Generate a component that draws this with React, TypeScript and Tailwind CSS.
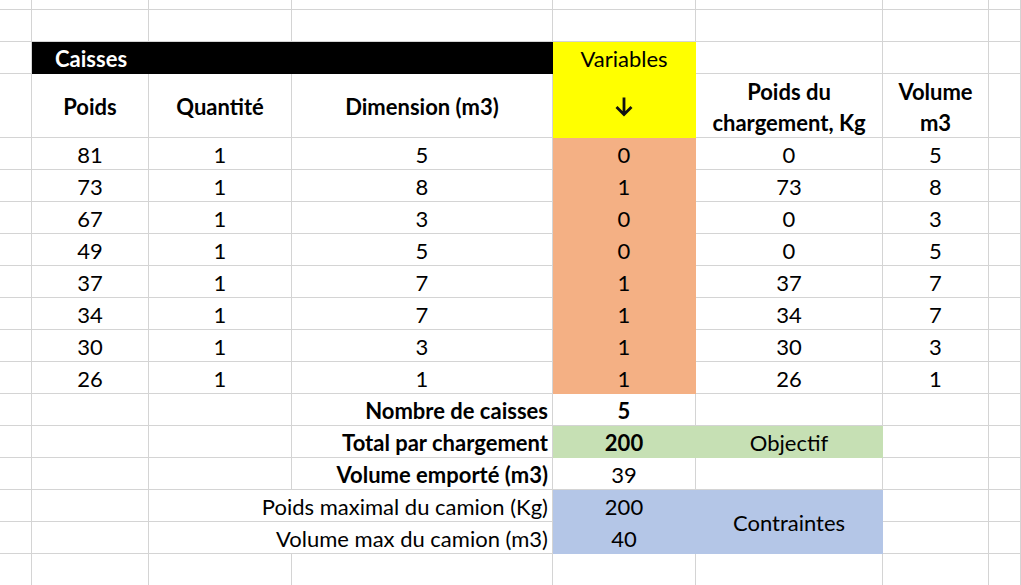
import type { ReactNode } from 'react'

const line = 'border-r border-b border-[#d4d4d4]'

type CellProps = {
  children?: ReactNode
  className?: string
}

function Cell({ children, className = '' }: CellProps) {
  return <div className={`flex items-center justify-center pt-[2px] ${className}`}>{children}</div>
}

const boxes = [
  { poids: 81, qte: 1, dim: 5, x: 0 },
  { poids: 73, qte: 1, dim: 8, x: 1 },
  { poids: 67, qte: 1, dim: 3, x: 0 },
  { poids: 49, qte: 1, dim: 5, x: 0 },
  { poids: 37, qte: 1, dim: 7, x: 1 },
  { poids: 34, qte: 1, dim: 7, x: 1 },
  { poids: 30, qte: 1, dim: 3, x: 1 },
  { poids: 26, qte: 1, dim: 1, x: 1 },
]

function ArrowDown() {
  return (
    <svg width="20" height="21" viewBox="0 0 20 21" fill="none">
      <path d="M10 1.5V18.5M2.5 11L10 18.5L17.5 11" stroke="#111" strokeWidth="2.8" />
    </svg>
  )
}

export default function App() {
  return (
    <div className="w-[1021px] h-[585px] overflow-hidden bg-white font-['Lato','Noto_Sans',sans-serif] text-[22px] text-black">
      <div className="grid grid-cols-[32px_117px_143px_261px_143px_187px_106px_1fr] grid-rows-[10px_32px_32px_64px_repeat(14,32px)]">
        {/* row 1 (cut off) */}
        {Array.from({ length: 8 }).map((_, i) => (
          <Cell key={`a${i}`} className={line} />
        ))}

        {/* row 2 */}
        {Array.from({ length: 8 }).map((_, i) => (
          <Cell key={`b${i}`} className={line} />
        ))}

        {/* row 3: titles */}
        <Cell className={line} />
        <div className="col-span-3 flex items-center pl-[23px] pt-[2px] bg-black border-r border-b border-black text-white font-bold">
          Caisses
        </div>
        <Cell className="bg-[#ffff00] border-r border-b border-[#ffff00]">Variables</Cell>
        <Cell className={line} />
        <Cell className={line} />
        <Cell className={line} />

        {/* row 4: headers */}
        <Cell className={line} />
        <Cell className={`${line} font-bold`}>Poids</Cell>
        <Cell className={`${line} font-bold`}>Quantité</Cell>
        <Cell className={`${line} font-bold`}>Dimension (m3)</Cell>
        <Cell className="bg-[#ffff00] border-r border-b border-[#ffff00]">
          <ArrowDown />
        </Cell>
        <Cell className={`${line} font-bold text-center leading-[31px]`}>
          Poids du
          <br />
          chargement, Kg
        </Cell>
        <Cell className={`${line} font-bold text-center leading-[31px]`}>
          Volume
          <br />
          m3
        </Cell>
        <Cell className={line} />

        {/* data rows */}
        {boxes.map((b, i) => (
          <div key={i} className="contents">
            <Cell className={line} />
            <Cell className={line}>{b.poids}</Cell>
            <Cell className={line}>{b.qte}</Cell>
            <Cell className={line}>{b.dim}</Cell>
            <Cell className="bg-[#f4b084] border-r border-b border-[#f4b084]">{b.x}</Cell>
            <Cell className={line}>{b.x * b.poids}</Cell>
            <Cell className={line}>{b.dim}</Cell>
            <Cell className={line} />
          </div>
        ))}

        {/* Nombre de caisses */}
        <Cell className={line} />
        <Cell className={line} />
        <Cell className={line} />
        <Cell className={`${line} justify-end pr-[4px] font-bold`}>Nombre de caisses</Cell>
        <Cell className={`${line} font-bold`}>5</Cell>
        <Cell className={line} />
        <Cell className={line} />
        <Cell className={line} />

        {/* Total par chargement */}
        <Cell className={line} />
        <Cell className={line} />
        <Cell className={line} />
        <Cell className={`${line} justify-end pr-[4px] font-bold`}>Total par chargement</Cell>
        <Cell className="bg-[#c6e0b4] border-r border-b border-[#c6e0b4] font-bold">200</Cell>
        <Cell className="bg-[#c6e0b4] border-r border-b border-[#c6e0b4]">Objectif</Cell>
        <Cell className={line} />
        <Cell className={line} />

        {/* Volume emporté */}
        <Cell className={line} />
        <Cell className={line} />
        <Cell className={line} />
        <Cell className={`${line} justify-end pr-[4px] font-bold whitespace-nowrap`}>Volume emporté (m3)</Cell>
        <Cell className={line}>39</Cell>
        <Cell className={line} />
        <Cell className={line} />
        <Cell className={line} />

        {/* Poids maximal */}
        <Cell className={line} />
        <Cell className={line} />
        <Cell className={`${line} col-span-2 justify-end pr-[4px] whitespace-nowrap`}>Poids maximal du camion (Kg)</Cell>
        <Cell className="bg-[#b4c6e7] border-r border-b border-[#b4c6e7]">200</Cell>
        <Cell className="row-span-2 bg-[#b4c6e7] border-r border-b border-[#b4c6e7]">Contraintes</Cell>
        <Cell className={line} />
        <Cell className={line} />

        {/* Volume max */}
        <Cell className={line} />
        <Cell className={line} />
        <Cell className={`${line} col-span-2 justify-end pr-[4px] whitespace-nowrap`}>Volume max du camion (m3)</Cell>
        <Cell className="bg-[#b4c6e7] border-r border-b border-[#b4c6e7]">40</Cell>
        <Cell className={line} />
        <Cell className={line} />

        {/* empty last row */}
        {Array.from({ length: 8 }).map((_, i) => (
          <Cell key={`z${i}`} className={line} />
        ))}
      </div>
    </div>
  )
}
